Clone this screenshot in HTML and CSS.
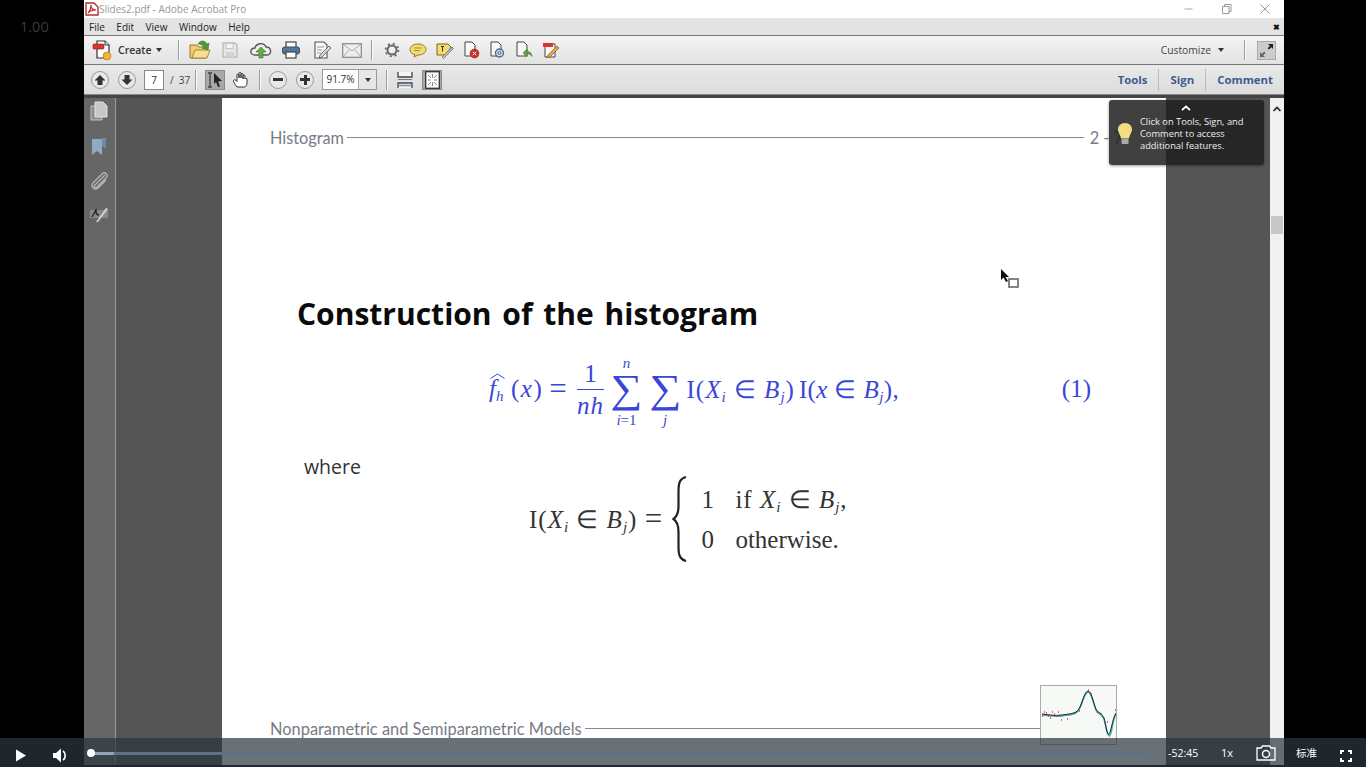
FILE: index.html
```html
<html>
    <head>
        <meta charset="utf-8">
        <meta name="viewport" content="width=device-width">
        <title>Slides2.pdf - Adobe Acrobat Pro</title>
        <link rel="stylesheet" href="styles.css">
    </head>
    <body>
        <div id="screen">
            <div id="gutter">1.00</div>

            <div id="app">
                <div id="titlebar">
                    <svg class="pdficon" width="14" height="14" viewBox="0 0 14 14"><path d="M1 1h8l4 4v8H1z" fill="#fff" stroke="#a33" stroke-width="1.4"/><path d="M3 11c2-2 3-5 3-8 0 3 2 5 5 5-3 0-6 1-8 3z" fill="none" stroke="#c22" stroke-width="1.2"/></svg>
                    <span class="doc-title">Slides2.pdf - Adobe Acrobat Pro</span>
                    <div class="winbtns">
                        <svg width="12" height="12" viewBox="0 0 12 12"><path d="M1.5 6h8" stroke="#aaa" fill="none"/></svg>
                        <svg width="12" height="12" viewBox="0 0 12 12"><path d="M1.5 3.5h6.500v7h-6.500zM3.500 3.500v-2h6.500v7h-2" stroke="#999" fill="none"/></svg>
                        <svg width="12" height="12" viewBox="0 0 12 12"><path d="M1.500 1.500l9 9M10.500 1.500l-9 9" stroke="#999" fill="none"/></svg>
                    </div>
                </div>

                <div id="menubar">
                    <span>File</span><span>Edit</span><span>View</span><span>Window</span><span>Help</span>
                    <b class="menu-close">&#10006;</b>
                </div>

                <div id="toolbar">
                    <svg class="create-icon" width="22" height="22" viewBox="0 0 22 22"><path d="M5 2h8l4 4v13H5z" fill="#fff" stroke="#333" stroke-width="1.200"/><path d="M13 2v4h4" fill="#eee" stroke="#333"/><rect x="1" y="5" width="11" height="5" rx="1" fill="#d9352c" stroke="#8c1d18" stroke-width=".6"/><circle cx="15" cy="17" r="4" fill="#f0b23c" stroke="#b97e14" stroke-width=".7"/></svg>
                    <b class="create-label">Create</b>
                    <i class="caret"></i>
                    <i class="sep sep-a"></i>
                    <div class="tb"><svg width="22" height="22" viewBox="0 0 22 22"><path d="M1 6h7l2 2h7v11H1z" fill="#f0cc6c" stroke="#96742a"/><path d="M3 19l3-8h15l-3 8z" fill="#f7de92" stroke="#96742a" stroke-width=".8"/><path d="M9 5c2-4 7-4 9 0l2-1-1 7-6-2 2-1c-1-2-4-3-6-3z" fill="#4f9a36" stroke="#2f6e1e" stroke-width=".5"/></svg></div>
                    <div class="tb"><svg width="18" height="18" viewBox="0 0 18 18"><path d="M2 2h12l2 2v12H2z" fill="#e6e6e6" stroke="#bdbdbd" stroke-width="1.400"/><rect x="5" y="2.500" width="7" height="5" fill="#f4f4f4" stroke="#c4c4c4"/><rect x="5" y="11" width="8" height="5" fill="#d2d2d2"/></svg></div>
                    <div class="tb"><svg width="22" height="20" viewBox="0 0 22 20"><path d="M5 15c-6 0-5-7 0-7 1-5 9-6 11-1 6 0 6 8 1 8z" fill="#eee" stroke="#555" stroke-width="1.300"/><path d="M11 7l5 5h-3v6h-4v-6h-3z" fill="#62ad45" stroke="#37761f" stroke-width=".6"/></svg></div>
                    <div class="tb"><svg width="20" height="20" viewBox="0 0 20 20"><rect x="5" y="2" width="10" height="6" fill="#fff" stroke="#444" stroke-width="1.200"/><rect x="1.500" y="7" width="17" height="7" rx="2" fill="#51779b" stroke="#34506c"/><rect x="5" y="12" width="10" height="6" fill="#fff" stroke="#444" stroke-width="1.200"/></svg></div>
                    <div class="tb"><svg width="20" height="20" viewBox="0 0 20 20"><path d="M3 2h9l3 3v13H3z" fill="#f7f7f7" stroke="#555" stroke-width="1.100"/><path d="M5 7h7M5 10h5M5 13h4" stroke="#999" fill="none"/><path d="M8 15l9-9 2 2-9 9-3 1z" fill="#cfd6dc" stroke="#555" stroke-width=".8"/></svg></div>
                    <div class="tb"><svg width="20" height="15" viewBox="0 0 20 15"><rect x=".7" y=".7" width="18.600" height="13.600" fill="#eee" stroke="#888" stroke-width="1.200"/><path d="M1 1l9 7 9-7M1 14l6-7M19 14l-6-7" fill="none" stroke="#aaa"/></svg></div>
                    <i class="sep sep-b"></i>
                    <div class="tb2"><svg width="16" height="16" viewBox="0 0 16 16"><circle cx="8" cy="8" r="4.500" fill="#eee" stroke="#666" stroke-width="2"/><circle cx="8" cy="8" r="6.400" fill="none" stroke="#666" stroke-width="1.800" stroke-dasharray="2 3.030"/></svg></div>
                    <div class="tb2"><svg width="18" height="15" viewBox="0 0 18 15"><path d="M9 1c5 0 8 2.500 8 5.500S14 12 9 12l-4 2 1-2.300C3 11 1 9 1 6.500 1 3.500 4 1 9 1z" fill="#f3dc6e" stroke="#8e7a26"/><path d="M5 5h8M5 7.500h6" stroke="#a8902f" fill="none"/></svg></div>
                    <div class="tb2"><svg width="18" height="17" viewBox="0 0 18 17"><path d="M1 2h11l3 3-5 8H1z" fill="#f3dc6e" stroke="#77651e"/><path d="M5 4.500h3M6.500 4.500v5" stroke="#333" fill="none"/><path d="M6 15l10-10 1.500 1.500-10 10z" fill="#b9bdc2" stroke="#666" stroke-width=".7"/></svg></div>
                    <div class="tb2"><svg width="17" height="18" viewBox="0 0 17 18"><path d="M2 1h7l3 3v11H2z" fill="#f8f8f8" stroke="#444"/><circle cx="11.500" cy="12.500" r="4.500" fill="#d0302a" stroke="#8c1d18" stroke-width=".5"/><path d="M9.800 10.800l3.400 3.400M13.200 10.800l-3.400 3.400" stroke="#fff" fill="none"/></svg></div>
                    <div class="tb2"><svg width="17" height="18" viewBox="0 0 17 18"><path d="M2 1h7l3 3v11H2z" fill="#f8f8f8" stroke="#444"/><circle cx="10.500" cy="12" r="4" fill="#cfdbe6" stroke="#4c6a86" stroke-width="1.400"/><circle cx="10.500" cy="12" r="1.500" fill="none" stroke="#4c6a86"/></svg></div>
                    <div class="tb2"><svg width="18" height="18" viewBox="0 0 18 18"><path d="M2 1h7l3 3v11H2z" fill="#f8f8f8" stroke="#444"/><path d="M8 12l4-4v2.500c3 0 5 1.500 5 5-1-2-3-2.500-5-2.500V16z" fill="#5ca53f" stroke="#37761f" stroke-width=".5"/></svg></div>
                    <div class="tb2"><svg width="18" height="18" viewBox="0 0 18 18"><path d="M3 3h10v13H3z" fill="#f8f8f8" stroke="#444"/><rect x="1" y="2" width="10" height="4" fill="#d9352c"/><path d="M6 14l9-9 2 2-9 9-3 .5z" fill="#e9a24a" stroke="#8a5a1c" stroke-width=".7"/></svg></div>

                    <span class="customize">Customize</span>
                    <i class="caret caret-custom"></i>
                    <i class="sep sep-c"></i>
                    <div class="expand"><svg width="15" height="15" viewBox="0 0 15 15"><path d="M9 1h5v5l-1.700-1.700-2.300 2.300-1.400-1.400 2.300-2.300z" fill="#222"/><path d="M1 9v5h5l-1.700-1.700 2.300-2.300-1.400-1.400-2.300 2.300z" fill="#666"/></svg></div>
                </div>

                <div id="navbar">
                    <div class="round round-up"><svg width="12" height="12" viewBox="0 0 12 12"><path d="M6 1l5.500 5.500H8.500V11h-5V6.500H.5z" fill="#333"/></svg></div>
                    <div class="round"><svg width="12" height="12" viewBox="0 0 12 12"><path d="M6 11L.5 5.500h3V1h5v4.500h3z" fill="#333"/></svg></div>
                    <div class="pagebox">7</div>
                    <span class="pagecount">/ &nbsp;37</span>
                    <i class="sep sep-n1"></i>
                    <div class="pressed"><svg width="18" height="18" viewBox="0 0 18 18"><path d="M2 2h4M2 16h4M4 2v14" stroke="#444" stroke-width="1.300" fill="none"/><path d="M8 2l8 8-4 .5 2 5-2 .5-2-5-2 2z" fill="#222"/></svg></div>
                    <div class="hand"><svg width="18" height="18" viewBox="0 0 18 18"><path d="M5 16c-2-3-4-5-3.500-6.500S4 9 5 10.500V4c0-1.500 2-1.500 2 0v3-4.500c0-1.500 2-1.500 2 0V7 3.500c0-1.500 2-1.500 2 0V8 5c0-1.500 2-1.500 2 0v3 0c0-1 2-1 2 0v4c0 2-1 3-2 4z" fill="#fff" stroke="#333" stroke-width="1"/></svg></div>
                    <i class="sep sep-n2"></i>
                    <div class="round round-minus"><i class="glyph-minus"></i></div>
                    <div class="round round-plus"><i class="glyph-minus"></i><i class="glyph-plus"></i></div>
                    <div class="zoombox"><span class="zoomval">91.7%</span><span class="zoomdrop"><i class="caret caret-zoom"></i></span></div>
                    <i class="sep sep-n3"></i>
                    <div class="fit"><svg width="16" height="18" viewBox="0 0 16 18"><path d="M1 1v5h14V1M1 17v-5h14v5" fill="#f4f4f4" stroke="#444" stroke-width="1.300"/><path d="M1 8.500h14" stroke="#777" fill="none"/><path d="M2 14.500h12" stroke="#6d92bc" stroke-width="1.500" fill="none"/></svg></div>
                    <div class="pressed fitpage"><svg width="15" height="18" viewBox="0 0 15 18"><rect x=".7" y=".7" width="13.600" height="16.600" fill="#fff" stroke="#333" stroke-width="1.300"/><path d="M7.500 3v4M7.500 11v4M3 9h3M9 9h3M3 4l3 3M12 4L9 7M3 14l3-3M12 14l-3-3" stroke="#6d8fb8" fill="none"/></svg></div>

                    <div class="panes">
                        <b>Tools</b><i class="panesep"></i><b>Sign</b><i class="panesep"></i><b>Comment</b>
                    </div>
                </div>

                <div id="workspace">
                    <div id="sidepanel">
                        <svg width="18" height="20" viewBox="0 0 18 20"><path d="M1 5h11v14H1z" fill="#8d8d8d" stroke="#c2c2c2"/><path d="M5 1h8l4 4v11H5z" fill="#c8c8c8" stroke="#e2e2e2"/></svg>
                        <svg width="16" height="19" viewBox="0 0 16 19"><path d="M1 2h10v16l-5-4-5 4z" fill="#93abc2"/><path d="M11 1h4v11l-4-3z" fill="#6f8aa5"/></svg>
                        <svg width="19" height="20" viewBox="0 0 19 20"><path d="M15 4L5 14c-2 2 0 4 2 2l9-9c3-3-1-7-4-4L3 12c-3 4 2 8 5 5l8-8" fill="none" stroke="#b5b5b5" stroke-width="1.300"/></svg>
                        <svg width="20" height="16" viewBox="0 0 20 16"><path d="M1 3h18v8H1z" fill="#888"/><path d="M3 10c2-3 3-6 4-7 0 3 0 5 3 5" fill="none" stroke="#222" stroke-width="1.300"/><path d="M7 15L17 1l2 1-10 13z" fill="#d2d2d2"/></svg>
                    </div>

                    <div id="docarea">
                        <div id="page">
                            <div class="slide-head">
                                <span>Histogram</span><i class="rule"></i><span class="slide-num">2 - 7</span>
                            </div>

                            <h1 class="slide-title">Construction of the histogram</h1>

                            <div class="eq-row">
                                <div class="math eq-main">
                                    <span class="fhat"><svg class="hat" width="15" height="6" viewBox="0 0 15 6"><path d="M.5 5.500L7.500 1l7 4.500" fill="none" stroke="#3a46d8"/></svg><em>f</em><sub><em>h</em></sub></span>
                                    <span class="args">(<em>x</em>)</span>
                                    <span class="eq">=</span>
                                    <span class="frac"><span class="numer">1</span><span class="denom"><em>nh</em></span></span>
                                    <span class="bigop"><small><em>n</em></small><span class="sigma">&sum;</span><small><em>i</em>=1</small></span>
                                    <span class="bigop"><small>&nbsp;</small><span class="sigma">&sum;</span><small><em>j</em></small></span>
                                    <span class="term">I(<em>X</em><sub><em>i</em></sub> &isin; <em>B</em><sub><em>j</em></sub>)</span>
                                    <span class="term term-b">I(<em>x</em> &isin; <em>B</em><sub><em>j</em></sub>),</span>
                                </div>
                                <span class="math eq-num">(1)</span>
                            </div>

                            <p class="where">where</p>

                            <div class="math cases">
                                <span class="term-plain">I(<em>X</em><sub><em>i</em></sub> &isin; <em>B</em><sub><em>j</em></sub>)</span>
                                <span class="eq">=</span>
                                <svg class="brace" width="16" height="86" viewBox="0 0 16 86"><path d="M14 1C7 3 6.500 8 6.500 16v14c0 6-2 11-5 13 3 2 5 7 5 13v14c0 8 .5 13 7.500 15" fill="none" stroke="#222" stroke-width="2.200"/></svg>
                                <div class="case-table">
                                    <div class="case-row"><span class="case-val">1</span><span class="case-if">if <em>X</em><sub><em>i</em></sub> &isin; <em>B</em><sub><em>j</em></sub>,</span></div>
                                    <div class="case-row"><span class="case-val">0</span><span>otherwise.</span></div>
                                </div>
                            </div>

                            <div class="slide-foot">
                                <div class="foot-line"><span>Nonparametric and Semiparametric Models</span><i class="rule"></i></div>
                                <div class="thumb">
                                    <svg width="75" height="58" viewBox="0 0 75 58">
                                        <path d="M1 29c8 1 14 2 20 1s10-1 14-3c6-3 7-20 12-21 4 0 6 16 9 20 4 2 6 5 7 7 2 7 3 18 6 16 2-1 2-14 6-21" fill="none" stroke="#35b5c2" stroke-width="1.500"/>
                                        <path d="M1 28c8 1 14 2 20 1s10-1 14-3c6-3 7-20 12-21 4 0 6 16 9 20 4 2 6 5 7 7 2 7 3 18 5 16 2-1 3-14 7-21" fill="none" stroke="#222"/>
                                        <path d="M1 30h1M5 27h1M9 32h1M13 28h1M17 26h1M20 34h1M26 33h1M30 28h1M38 25h1M47 4h1M50 8h1M56 26h1M60 28h1M66 36h1M68 50h1M74 24h1M3 26h1M7 30h1M11 26h1M15 30h1" stroke="#e33" stroke-width="1.500" fill="none"/>
                                    </svg>
                                </div>
                            </div>

                            <svg class="cursor" width="20" height="21" viewBox="0 0 20 21"><path d="M1 1v11l2.500-2.500L6 14l2-1-2.500-4H9z" fill="#111"/><rect x="9" y="11" width="9" height="8" fill="#fff" stroke="#777" stroke-width="1.800"/></svg>
                        </div>
                    </div>

                    <div id="scrollbar">
                        <svg width="10" height="6" viewBox="0 0 10 6"><path d="M1.500 5L5 1.500 8.500 5" fill="none" stroke="#222" stroke-width="1.600"/></svg>
                        <i class="thumbbar"></i>
                    </div>

                    <div id="tip">
                        <svg class="tip-chev" width="10" height="6" viewBox="0 0 10 6"><path d="M1 5l4-3.500L9 5" fill="none" stroke="#fff" stroke-width="1.800"/></svg>
                        <div class="tip-body">
                            <svg width="16" height="24" viewBox="0 0 16 24"><path d="M8 1c4.500 0 7 3 7 6.500 0 3-2.500 5-3 9H4c-.5-4-3-6-3-9C1 4 3.500 1 8 1z" fill="#f4de84"/><rect x="4.500" y="17" width="7" height="5" rx="1" fill="#aaa"/></svg>
                            <p>Click on Tools, Sign, and Comment to access additional features.</p>
                        </div>
                    </div>
                </div>
            </div>
        </div>

        <div id="player">
            <div class="pbtn"><svg width="12" height="13" viewBox="0 0 12 13"><path d="M1 .5l10 6-10 6z" fill="#fff"/></svg></div>
            <div class="pbtn pbtn-vol"><svg width="16" height="15" viewBox="0 0 16 15"><path d="M0 5h3l5-4.500v14L3 10H0z" fill="#fff"/><path d="M10 3c3 2 3 7 0 9" fill="none" stroke="#fff" stroke-width="1.700"/></svg></div>
            <div class="track"><i class="track-done"></i><i class="knob"></i></div>
            <span class="ptime">-52:45</span>
            <span class="prate">1x</span>
            <div class="pcam"><svg width="20" height="16" viewBox="0 0 20 16"><path d="M1 3h4l1.500-2h7L15 3h4v12H1z" fill="none" stroke="#fff" stroke-width="1.300"/><circle cx="10" cy="9" r="3.500" fill="none" stroke="#fff" stroke-width="1.500"/></svg></div>
            <span class="pquality">标准</span>
            <div class="pfull"><svg width="12" height="12" viewBox="0 0 12 12"><path d="M1 4V1h3M8 1h3v3M11 8v3H8M4 11H1V8" fill="none" stroke="#fff" stroke-width="2"/></svg></div>
        </div>
    </body>
</html>
```

FILE: styles.css
```css
html, body {
    margin: 0;
    height: 767px;
    overflow: hidden;
    background-color: #000;
}
body {
    position: relative;
    font-family: "Open Sans", "Noto Sans", sans-serif;
}
svg {
    display: block;
    flex: none;
}
i {
    display: block;
    flex: none;
}
#screen {
    display: flex;
    height: 765px;
}
#gutter {
    width: 84px;
    flex: none;
    padding: 17px 0 0 20px;
    box-sizing: border-box;
    color: #3a3a3a;
    font-size: 14.500px;
}
#app {
    width: 1200px;
    flex: none;
    display: flex;
    flex-direction: column;
}

/* window chrome */
#titlebar {
    height: 18px;
    display: flex;
    align-items: center;
    background-color: #fff;
    font-size: 10px;
    color: #999;
    padding-left: 1px;
}
.winbtns {
    margin-left: auto;
    display: flex;
    gap: 26px;
    margin-right: 13px;
}
#menubar {
    height: 17px;
    display: flex;
    align-items: center;
    gap: 11.500px;
    padding-left: 5px;
    background-color: #e3e3e3;
    border-bottom: 1px solid #777;
    font-size: 10px;
    color: #222;
}
.menu-close {
    margin-left: auto;
    margin-right: 4px;
    font-size: 8px;
    color: #111;
}
#toolbar {
    height: 28px;
    display: flex;
    align-items: center;
    background: linear-gradient(#f4f4f4, #e2e2e2);
    border-bottom: 1px solid #777;
}
.create-icon {
    margin-left: 8px;
}
.create-label {
    margin-left: 4px;
    font-size: 10.500px;
    font-weight: 600;
    color: #333;
}
.caret {
    width: 0;
    height: 0;
    margin-left: 4px;
    border-left: 3.500px solid transparent;
    border-right: 3.500px solid transparent;
    border-top: 4px solid #333;
}
.sep {
    width: 1px;
    height: 20px;
    background-color: #999;
    border-right: 1px solid #fff;
}
.sep-a { margin: 0 5px 0 16px; }
.sep-b { margin: 0 6px 0 3px; }
.tb {
    width: 30.500px;
    flex: none;
    display: flex;
    justify-content: center;
}
.tb2 {
    width: 26.500px;
    flex: none;
    display: flex;
    justify-content: center;
}
.customize {
    margin-left: auto;
    font-size: 10.300px;
    color: #444;
}
.caret-custom {
    margin-left: 7px;
}
.sep-c {
    margin: 0 11px 0 20px;
}
.expand {
    width: 19px;
    height: 19px;
    margin-right: 8px;
    display: flex;
    align-items: center;
    justify-content: center;
    background-color: #ccc;
    border: 1px solid #aaa;
    box-sizing: border-box;
}
#navbar {
    height: 29px;
    display: flex;
    align-items: center;
    background: linear-gradient(#e9e9e9, #dcdcdc);
    border-bottom: 1px solid #888;
}
.round {
    width: 18px;
    height: 18px;
    margin-left: 9px;
    position: relative;
    box-sizing: border-box;
    border-radius: 50%;
    border: 1px solid #999;
    background-color: #e8e8e8;
    display: flex;
    align-items: center;
    justify-content: center;
    flex: none;
}
.round-up { margin-left: 7px; }
.pagebox {
    width: 20px;
    height: 20px;
    margin-left: 8px;
    box-sizing: border-box;
    background-color: #fff;
    border: 1px solid #888;
    font-size: 10px;
    text-align: center;
    line-height: 18px;
    color: #333;
}
.pagecount {
    margin-left: 6px;
    width: 24px;
    font-size: 10px;
    color: #444;
    white-space: nowrap;
}
.sep-n1 { margin: 0 8px 0 1px; }
.pressed {
    width: 20px;
    height: 20px;
    box-sizing: border-box;
    background-color: #a9a9a9;
    border: 1px solid #8a8a8a;
    display: flex;
    align-items: center;
    justify-content: center;
    flex: none;
}
.hand {
    margin-left: 7px;
}
.sep-n2 { margin: 0 8px 0 9px; }
.round-minus { margin-left: 0; }
.round-plus { margin-left: 9px; }
.glyph-minus {
    width: 10px;
    height: 3px;
    background-color: #333;
}
.glyph-plus {
    position: absolute;
    width: 3px;
    height: 10px;
    background-color: #333;
}
.zoombox {
    width: 55px;
    height: 21px;
    margin-left: 8px;
    box-sizing: border-box;
    display: flex;
    background-color: #fff;
    border: 1px solid #999;
    font-size: 10px;
    color: #333;
    flex: none;
}
.zoomval {
    flex: 1;
    text-align: center;
    line-height: 19px;
}
.zoomdrop {
    width: 17px;
    background-color: #e6e6e6;
    border-left: 1px solid #aaa;
    display: flex;
    align-items: center;
    justify-content: center;
}
.caret-zoom {
    margin: 0;
}
.sep-n3 { margin: 0 9px 0 9px; }
.fitpage {
    margin-left: 9px;
}
.panes {
    margin-left: auto;
    display: flex;
    align-items: center;
    gap: 11px;
    padding-right: 11px;
    font-size: 11.400px;
    color: #3f5c8e;
}
.panesep {
    width: 1px;
    height: 22px;
    background-color: #bbb;
}

/* document */
#workspace {
    flex: 1;
    min-height: 0;
    display: flex;
    position: relative;
    border-top: 3px solid #444;
}
#sidepanel {
    width: 32px;
    flex: none;
    box-sizing: border-box;
    display: flex;
    flex-direction: column;
    align-items: center;
    gap: 15.500px;
    padding: 3px 1px 0 0;
    background-color: #666;
    border-right: 1px solid #9a9a9a;
}
#docarea {
    flex: 1;
    display: flex;
    padding-left: 106px;
    background-color: #555;
    overflow: hidden;
}
#page {
    width: 944px;
    height: 668px;
    flex: none;
    position: relative;
    background-color: #fff;
    display: flex;
    flex-direction: column;
}
.slide-head {
    display: flex;
    align-items: center;
    margin: 30px 43px 0 48px;
    height: 18px;
    font-family: Lato, sans-serif;
    font-size: 16.300px;
    color: #777b85;
    white-space: nowrap;
}
.rule {
    flex: 1;
    height: 1px;
    margin: 0 3px;
    background-color: #888;
}
.slide-num {
    margin-left: 3px;
}
.slide-title {
    margin: 148px 0 0 75px;
    height: 40px;
    font-family: "Open Sans", sans-serif;
    font-size: 30px;
    word-spacing: 3px;
    line-height: 40px;
    font-weight: 700;
    color: #0b0b0b;
}
.math {
    font-family: "Liberation Serif", serif;
    font-size: 25px;
    white-space: nowrap;
}
.math em {
    font-style: italic;
}
.math sub {
    font-size: 15px;
    line-height: 0;
    vertical-align: -4px;
}
.eq-row {
    display: flex;
    align-items: center;
    margin: 19px 75px 0 267px;
    height: 72px;
    color: #3a46d8;
}
.eq-main {
    display: flex;
    align-items: center;
}
.eq-num {
    margin-left: auto;
}
.fhat {
    position: relative;
    width: 22px;
}
.args {
    width: 31px;
    letter-spacing: 1.500px;
}
.hat {
    position: absolute;
    left: 1px;
    top: -2px;
}
.eq {
    width: 18px;
    margin-left: 7px;
    font-size: 31px;
    line-height: 30px;
    text-align: center;
}
.frac {
    display: flex;
    flex-direction: column;
    align-items: center;
    width: 27px;
    margin-left: 10px;
}
.numer {
    line-height: 25px;
    padding-bottom: 3px;
}
.denom {
    width: 100%;
    box-sizing: border-box;
    border-top: 1px solid currentColor;
    padding-top: 3px;
    line-height: 25px;
    text-align: center;
    letter-spacing: 1px;
}
.bigop {
    display: flex;
    flex-direction: column;
    align-items: center;
    width: 32px;
    margin: 6px 0 0 6.500px;
}
.bigop small {
    font-size: 15px;
    line-height: 15px;
}
.sigma {
    font-family: "Liberation Serif", serif;
    font-size: 40px;
    line-height: 42px;
    transform: translateY(-3px) scaleX(1.120);
}
.term {
    margin-left: 5.500px;
    letter-spacing: 1px;
}
.term-b {
    margin-left: 4px;
    letter-spacing: .4px;
}
.where {
    margin: 30px 0 0 82px;
    height: 24px;
    font-family: "Open Sans", sans-serif;
    font-size: 19.500px;
    line-height: 24px;
    color: #333;
}
.cases {
    display: flex;
    align-items: center;
    margin: -5px 0 0 307px;
    height: 90px;
    color: #333;
}
.term-plain {
    letter-spacing: 1px;
}
.brace {
    margin: 0 13px 0 10px;
}
.case-table {
    display: flex;
    flex-direction: column;
    gap: 13px;
}
.case-row {
    display: flex;
    height: 27px;
    line-height: 27px;
}
.case-val {
    width: 34px;
}
.case-if {
    letter-spacing: 1px;
}
.slide-foot {
    display: flex;
    align-items: flex-start;
    margin: auto 49px 21px 48px;
    height: 60px;
    font-family: Lato, sans-serif;
    font-size: 16.400px;
    color: #777b85;
    white-space: nowrap;
}
.foot-line {
    flex: 1;
    display: flex;
    align-items: center;
    height: 20px;
    margin-top: 33px;
}
.foot-line .rule {
    margin-right: 0;
}
.thumb {
    width: 77px;
    height: 60px;
    box-sizing: border-box;
    flex: none;
    background-color: #f6f9f5;
    border: 1px solid #aaa;
}
.cursor {
    position: absolute;
    left: 778px;
    top: 170px;
}
#scrollbar {
    width: 14px;
    flex: none;
    display: flex;
    flex-direction: column;
    align-items: center;
    background-color: #f0f0f0;
    padding-top: 8px;
    box-sizing: border-box;
}
.thumbbar {
    width: 12px;
    height: 18px;
    margin-top: 104px;
    background-color: #c8c8c8;
}
#tip {
    position: absolute;
    left: 1025px;
    top: 2px;
    width: 155px;
    height: 65px;
    box-sizing: border-box;
    padding-top: 5px;
    border-radius: 3px;
    background-color: rgba(30, 30, 30, .85);
    box-shadow: 0 1px 3px rgba(0, 0, 0, .4);
}
.tip-chev {
    margin: 0 auto 5px 72px;
}
.tip-body {
    display: flex;
    align-items: center;
    gap: 7px;
    padding-left: 8px;
}
.tip-body p {
    margin: 0;
    width: 116px;
    font-size: 9.300px;
    line-height: 12px;
    color: #eee;
}

/* video player on top of the recording */
#player {
    position: absolute;
    left: 0;
    right: 0;
    top: 738px;
    height: 29px;
    display: flex;
    align-items: center;
    background-color: rgba(44, 55, 65, .71);
    color: #fff;
    font-size: 11px;
}
.pbtn {
    width: 40px;
    flex: none;
    display: flex;
    justify-content: center;
    margin-top: 6px;
    position: relative;
    left: 1px;
}
.track {
    position: relative;
    margin-left: 11px;
    width: 1057px;
    height: 3px;
    margin-top: 1px;
    flex: none;
    background-color: #5c7088;
}
.track-done {
    width: 23px;
    height: 3px;
    background-color: #8ea4bd;
}
.knob {
    position: absolute;
    left: -4px;
    top: -3px;
    width: 8px;
    height: 8px;
    border-radius: 50%;
    background-color: #fff;
}
.ptime {
    margin-left: 20px;
    width: 30px;
    font-size: 10.500px;
}
.prate {
    margin-left: 23px;
    width: 20px;
}
.pcam {
    margin-left: 15px;
    width: 20px;
}
.pquality {
    margin-left: 20px;
    font-family: "Noto Sans CJK SC", sans-serif;
    font-size: 10.500px;
}
.pfull {
    margin-left: 23px;
    margin-top: 6px;
}
```
